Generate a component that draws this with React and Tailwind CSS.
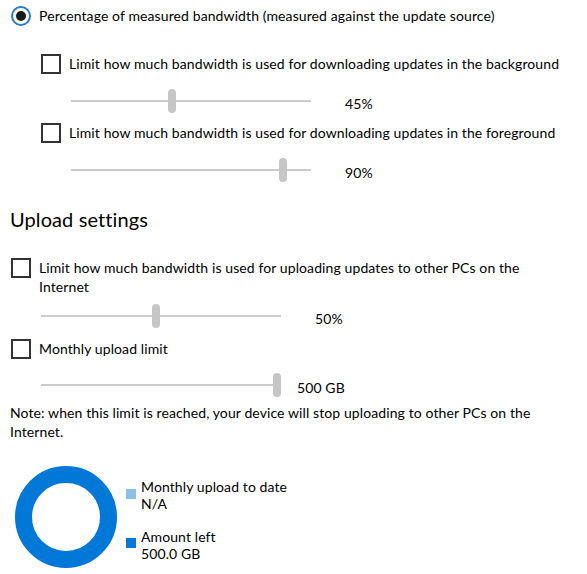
import React from 'react';

const font = { fontFamily: 'Lato, "Noto Sans", sans-serif' };

const Checkbox = () => (
  <div className="w-[20px] h-[20px] border-2 border-[#333333] bg-white shrink-0" />
);

const Slider = ({ thumb, label, gap }) => (
  <div className="flex items-center h-[24px]">
    <div className="relative w-[240px] h-[24px] shrink-0">
      <div className="absolute left-0 right-0 top-[11px] h-[2px] bg-[#cccccc]" />
      <div
        className="absolute top-0 w-[8px] h-[24px] rounded-full bg-[#c6c6c6]"
        style={{ left: thumb }}
      />
    </div>
    <span className={`${gap} mt-[6px] text-[14px] leading-[18px] text-black`}>{label}</span>
  </div>
);

export default function App() {
  return (
    <div className="w-[587px] h-[574px] bg-white overflow-hidden text-black tracking-[0.1px]" style={font}>
      {/* radio */}
      <div className="pt-[6px] ml-[11px] flex items-center h-[26px]">
        <div className="w-[20px] h-[20px] rounded-full border-2 border-[#2b7cc4] flex items-center justify-center shrink-0">
          <div className="w-[10px] h-[10px] rounded-full bg-[#1a1a1a]" />
        </div>
        <span className="ml-[8px] text-[14px] leading-[20px] whitespace-nowrap">
          Percentage of measured bandwidth (measured against the update source)
        </span>
      </div>

      <div className="ml-[41px]">
        <div className="mt-[28px] flex items-center h-[20px]">
          <Checkbox />
          <span className="ml-[8px] text-[14px] leading-[20px] whitespace-nowrap">
            Limit how much bandwidth is used for downloading updates in the background
          </span>
        </div>
        <div className="mt-[15px] ml-[30px]">
          <Slider thumb="97px" label="45%" gap="ml-[34px]" />
        </div>
        <div className="mt-[10px] flex items-center h-[20px]">
          <Checkbox />
          <span className="ml-[8px] text-[14px] leading-[20px] whitespace-nowrap">
            Limit how much bandwidth is used for downloading updates in the foreground
          </span>
        </div>
        <div className="mt-[15px] ml-[30px]">
          <Slider thumb="208px" label="90%" gap="ml-[34px]" />
        </div>
      </div>

      <div className="px-[10px]">
        <h2 className="mt-[23px] h-[28px] text-[20px] leading-[28px] font-normal">Upload settings</h2>

        <div className="mt-[25px] ml-[1px] flex items-start">
          <Checkbox />
          <span className="ml-[8px] text-[14px] leading-[19px] w-[525px]">
            Limit how much bandwidth is used for uploading updates to other PCs on the Internet
          </span>
        </div>
        <div className="mt-[8px] ml-[31px]">
          <Slider thumb="111px" label="50%" gap="ml-[34px]" />
        </div>
        <div className="mt-[11px] ml-[1px] flex items-center h-[20px]">
          <Checkbox />
          <span className="ml-[8px] text-[14px] leading-[20px]">Monthly upload limit</span>
        </div>
        <div className="mt-[14px] ml-[31px]">
          <Slider thumb="232px" label="500 GB" gap="ml-[16px]" />
        </div>

        <p className="mt-[6px] text-[14px] leading-[19px] w-[540px]">
          Note: when this limit is reached, your device will stop uploading to other PCs on the Internet.
        </p>

        <div className="mt-[25px] ml-[5px] flex items-center">
          <svg width="102" height="102" viewBox="0 0 102 102" className="shrink-0">
            <circle cx="51" cy="51" r="42.5" fill="none" stroke="#0078d7" strokeWidth="17" />
          </svg>
          <div className="ml-[9px] mt-[5px] flex flex-col gap-[16px]">
            <div className="flex items-start">
              <div className="mt-[11px] w-[10px] h-[10px] bg-[#8cc0ea] shrink-0" />
              <div className="ml-[5px] text-[14px] leading-[17px]">
                <div>Monthly upload to date</div>
                <div>N/A</div>
              </div>
            </div>
            <div className="flex items-start">
              <div className="mt-[10px] w-[10px] h-[10px] bg-[#0078d7] shrink-0" />
              <div className="ml-[5px] text-[14px] leading-[17px]">
                <div>Amount left</div>
                <div>500.0 GB</div>
              </div>
            </div>
          </div>
        </div>
      </div>
    </div>
  );
}
